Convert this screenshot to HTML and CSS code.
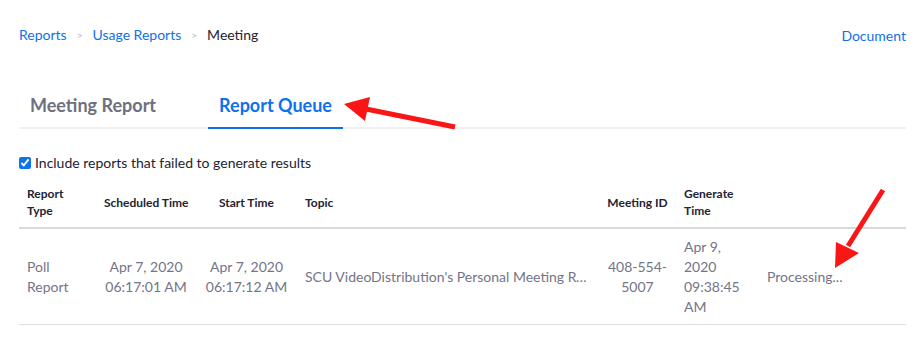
FILE: index.html
```html
<!DOCTYPE html>
<html lang="en">
<head>
    <meta charset="UTF-8">
    <title>Report Queue</title>
    <link rel="stylesheet" href="styles.css">
</head>
<body>

    <div class="top-row">
        <div class="breadcrumb">
            <a href="#">Reports</a>
            <span class="sep">&gt;</span>
            <a href="#">Usage Reports</a>
            <span class="sep">&gt;</span>
            <span class="current">Meeting</span>
        </div>
        <a href="#" class="doc-link">Document</a>
    </div>

    <div class="tabs">
        <div class="tab">Meeting Report</div>
        <div class="tab active">Report Queue</div>
    </div>

    <label class="include-failed">
        <input type="checkbox" checked>
        Include reports that failed to generate results
    </label>

    <table class="queue">
        <colgroup>
            <col class="c-type">
            <col class="c-sched">
            <col class="c-start">
            <col class="c-topic">
            <col class="c-id">
            <col class="c-gen">
            <col class="c-status">
        </colgroup>
        <thead>
            <tr>
                <th>Report Type</th>
                <th class="center nowrap">Scheduled Time</th>
                <th class="center nowrap">Start Time</th>
                <th>Topic</th>
                <th class="center nowrap">Meeting ID</th>
                <th>Generate Time</th>
                <th></th>
            </tr>
        </thead>
        <tbody>
            <tr>
                <td>Poll Report</td>
                <td class="center">Apr 7, 2020<br>06:17:01 AM</td>
                <td class="center">Apr 7, 2020<br>06:17:12 AM</td>
                <td class="topic">SCU VideoDistribution's Personal Meeting Room</td>
                <td class="center">408-554-5007</td>
                <td>Apr 9, 2020 09:38:45 AM</td>
                <td>Processing...</td>
            </tr>
        </tbody>
    </table>

    <!-- annotation arrows -->
    <svg class="arrows" width="915" height="338" viewBox="0 0 915 338">
        <line x1="455" y1="127" x2="366" y2="109" stroke="#fb1616" stroke-width="5"/>
        <polygon points="344,104 370,97 365,121" fill="#fb1616"/>
        <line x1="883" y1="190" x2="848" y2="246" stroke="#fb1616" stroke-width="5"/>
        <polygon points="835,268 836,242 859,253" fill="#fb1616"/>
    </svg>

</body>
</html>
```

FILE: styles.css
```css
body {
    margin: 0;
    padding: 0 9px 0 19px;
    font-family: Lato, "Open Sans", sans-serif;
    color: #232333;
    background: #fff;
    position: relative;
    height: 338px;
    overflow: hidden;
}
a {
    color: #0e71eb;
    text-decoration: none;
}
.top-row {
    display: flex;
    justify-content: space-between;
    padding-top: 25px;
    font-size: 14px;
    line-height: 18px;
}
.breadcrumb {
    display: flex;
    align-items: center;
}
.breadcrumb .sep {
    color: #b5b5bd;
    font-size: 10px;
    margin: 0 10px;
}
.doc-link {
    padding-top: 2px;
}
.tabs {
    display: flex;
    gap: 41px;
    margin-top: 48px;
    border-bottom: 2px solid #f1f1f2;
}
.tab {
    font-size: 18px;
    font-weight: bold;
    line-height: 24px;
    color: #6e7080;
    padding: 0 11px 10px;
    margin-bottom: -2px;
    border-bottom: 2px solid transparent;
}
.tab.active {
    color: #0e71eb;
    border-bottom-color: #0e71eb;
}
.include-failed {
    display: flex;
    align-items: center;
    gap: 4px;
    margin-top: 25px;
    font-size: 14px;
    line-height: 18px;
}
.include-failed input {
    width: 12px;
    height: 12px;
    margin: 0;
    accent-color: #0e72ed;
}
/* table */
.queue {
    width: 887px;
    margin-top: 7px;
    border-collapse: collapse;
    table-layout: fixed;
}
.c-type { width: 77px; }
.c-sched { width: 100px; }
.c-start { width: 101px; }
.c-topic { width: 302px; }
.c-id { width: 77px; }
.c-gen { width: 83px; }
.queue th {
    font-size: 12px;
    font-weight: bold;
    line-height: 17px;
    text-align: left;
    padding: 6px 8px 8px;
    border-bottom: 2px solid #d9d9dc;
    vertical-align: middle;
}
.queue td {
    font-size: 14px;
    line-height: 20px;
    color: #747487;
    padding: 8px 8px 7px;
    border-bottom: 1px solid #dedee2;
    vertical-align: middle;
}
.queue .center {
    text-align: center;
}
.queue .nowrap {
    white-space: nowrap;
}
.queue .topic {
    white-space: nowrap;
    overflow: hidden;
    text-overflow: ellipsis;
}
.arrows {
    position: absolute;
    top: 0;
    left: 0;
    pointer-events: none;
}
```
